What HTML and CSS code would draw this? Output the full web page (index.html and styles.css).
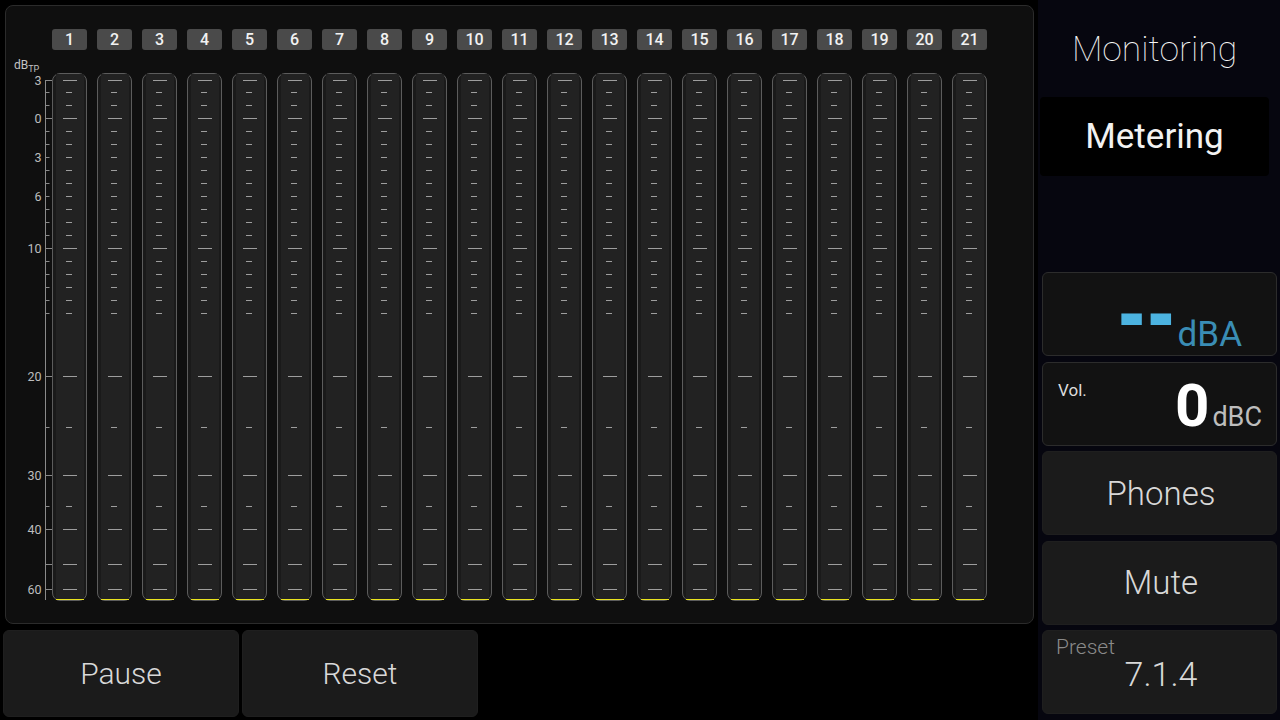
FILE: index.html
```html
<!DOCTYPE html>
<html>
<head>
<meta charset="utf-8">
<link rel="stylesheet" href="styles.css">
</head>
<body>
<div class="left">
  <div class="panel">
    <svg class="scale" width="46" height="600" viewBox="0 0 46 600">
      <text class="unit-lbl" x="8" y="63">dB<tspan class="sub" dy="3">TP</tspan></text>
      <g class="axis">
        <line x1="39.5" y1="74" x2="39.5" y2="594"/>
        <line x1="39" y1="74.5" x2="46" y2="74.5"/>
        <line x1="39" y1="86.5" x2="43.5" y2="86.5"/>
        <line x1="39" y1="99.5" x2="43.5" y2="99.5"/>
        <line x1="39" y1="112.5" x2="46" y2="112.5"/>
        <line x1="39" y1="125.5" x2="43.5" y2="125.5"/>
        <line x1="39" y1="138.5" x2="43.5" y2="138.5"/>
        <line x1="39" y1="151.5" x2="43.5" y2="151.5"/>
        <line x1="39" y1="164.5" x2="43.5" y2="164.5"/>
        <line x1="39" y1="177.5" x2="43.5" y2="177.5"/>
        <line x1="39" y1="190.5" x2="43.5" y2="190.5"/>
        <line x1="39" y1="203.5" x2="43.5" y2="203.5"/>
        <line x1="39" y1="216.5" x2="43.5" y2="216.5"/>
        <line x1="39" y1="229.5" x2="43.5" y2="229.5"/>
        <line x1="39" y1="242.5" x2="46" y2="242.5"/>
        <line x1="39" y1="255.5" x2="43.5" y2="255.5"/>
        <line x1="39" y1="268.5" x2="43.5" y2="268.5"/>
        <line x1="39" y1="281.5" x2="43.5" y2="281.5"/>
        <line x1="39" y1="294.5" x2="43.5" y2="294.5"/>
        <line x1="39" y1="307.5" x2="43.5" y2="307.5"/>
        <line x1="39" y1="370.5" x2="46" y2="370.5"/>
        <line x1="39" y1="421.5" x2="43.5" y2="421.5"/>
        <line x1="39" y1="469.5" x2="46" y2="469.5"/>
        <line x1="39" y1="500.5" x2="43.5" y2="500.5"/>
        <line x1="39" y1="523.5" x2="46" y2="523.5"/>
        <line x1="39" y1="558.5" x2="46" y2="558.5"/>
        <line x1="39" y1="583.5" x2="46" y2="583.5"/>
      </g>
      <g class="nums">
        <text x="35.5" y="78.5">3</text>
        <text x="35.5" y="116.5">0</text>
        <text x="35.5" y="155.5">3</text>
        <text x="35.5" y="194.5">6</text>
        <text x="35.5" y="246.5">10</text>
        <text x="35.5" y="374.5">20</text>
        <text x="35.5" y="473.5">30</text>
        <text x="35.5" y="527.5">40</text>
        <text x="35.5" y="587.5">60</text>
      </g>
    </svg>
    <div class="channels">
      <div class="ch"><div class="num">1</div><div class="tube"><div class="col"></div></div></div>
      <div class="ch"><div class="num">2</div><div class="tube"><div class="col"></div></div></div>
      <div class="ch"><div class="num">3</div><div class="tube"><div class="col"></div></div></div>
      <div class="ch"><div class="num">4</div><div class="tube"><div class="col"></div></div></div>
      <div class="ch"><div class="num">5</div><div class="tube"><div class="col"></div></div></div>
      <div class="ch"><div class="num">6</div><div class="tube"><div class="col"></div></div></div>
      <div class="ch"><div class="num">7</div><div class="tube"><div class="col"></div></div></div>
      <div class="ch"><div class="num">8</div><div class="tube"><div class="col"></div></div></div>
      <div class="ch"><div class="num">9</div><div class="tube"><div class="col"></div></div></div>
      <div class="ch"><div class="num">10</div><div class="tube"><div class="col"></div></div></div>
      <div class="ch"><div class="num">11</div><div class="tube"><div class="col"></div></div></div>
      <div class="ch"><div class="num">12</div><div class="tube"><div class="col"></div></div></div>
      <div class="ch"><div class="num">13</div><div class="tube"><div class="col"></div></div></div>
      <div class="ch"><div class="num">14</div><div class="tube"><div class="col"></div></div></div>
      <div class="ch"><div class="num">15</div><div class="tube"><div class="col"></div></div></div>
      <div class="ch"><div class="num">16</div><div class="tube"><div class="col"></div></div></div>
      <div class="ch"><div class="num">17</div><div class="tube"><div class="col"></div></div></div>
      <div class="ch"><div class="num">18</div><div class="tube"><div class="col"></div></div></div>
      <div class="ch"><div class="num">19</div><div class="tube"><div class="col"></div></div></div>
      <div class="ch"><div class="num">20</div><div class="tube"><div class="col"></div></div></div>
      <div class="ch"><div class="num">21</div><div class="tube"><div class="col"></div></div></div>
    </div>
  </div>
  <div class="bottom">
    <div class="btn wide">Pause</div>
    <div class="btn wide">Reset</div>
  </div>
</div>
<div class="right">
  <div class="title">Monitoring</div>
  <div class="tab">Metering</div>
  <div class="stack">
    <div class="readout dba"><span class="dash">--</span><span class="dba-unit">dBA</span></div>
    <div class="readout vol"><span class="vol-label">Vol.</span><span class="vol-val"><b class="zero">0</b><span class="dbc">dBC</span></span></div>
    <div class="btn side">Phones</div>
    <div class="btn side">Mute</div>
    <div class="btn side preset"><span class="preset-label">Preset</span><span class="preset-val">7.1.4</span></div>
  </div>
</div>
</body>
</html>
```

FILE: styles.css
```css
html, body {
  margin: 0;
  padding: 0;
}
body {
  width: 1280px;
  height: 720px;
  overflow: hidden;
  background: #000;
  display: flex;
  font-family: Roboto, "Liberation Sans", sans-serif;
  color: #e6e6e6;
}
.left {
  width: 1038px;
  display: flex;
  flex-direction: column;
}
.panel {
  margin: 5px 0 0 5px;
  width: 1029px;
  height: 619px;
  box-sizing: border-box;
  border: 1px solid #2b2b2b;
  border-radius: 8px;
  background: #0f0f0f;
  display: flex;
  align-items: flex-start;
}
.scale {
  flex: none;
  display: block;
}
.unit-lbl {
  font-size: 12px;
  fill: #c4c4c4;
}
.unit-lbl .sub {
  font-size: 9px;
}
.axis line {
  stroke: #8a8a8a;
  stroke-width: 1;
}
.nums text {
  font-size: 12.5px;
  fill: #bdbdbd;
  text-anchor: end;
}
.channels {
  display: flex;
  gap: 10px;
  padding-top: 23px;
}
.ch {
  width: 35px;
  display: flex;
  flex-direction: column;
  gap: 23px;
}
.num {
  height: 21px;
  border-radius: 3px;
  background: #4a4a4a;
  color: #f2f2f2;
  font-size: 16px;
  font-weight: 500;
  line-height: 21px;
  text-align: center;
}
.tube {
  height: 528px;
  box-sizing: border-box;
  border: 1px solid #5c5c5c;
  border-radius: 8px;
  background: #1a1a1a;
  padding: 0 2px 0 3px;
}
.col {
  --tk: #9e9e9e;
  --yl: #e8e21e;
  height: 100%;
  background:
    linear-gradient(var(--yl), var(--yl)) 0 100% / 100% 1px no-repeat,
    linear-gradient(var(--tk), var(--tk)) 7px 6px / 14px 1px no-repeat,
    linear-gradient(var(--tk), var(--tk)) 10px 18px / 6px 1px no-repeat,
    linear-gradient(var(--tk), var(--tk)) 10px 31px / 6px 1px no-repeat,
    linear-gradient(var(--tk), var(--tk)) 7px 44px / 14px 1px no-repeat,
    linear-gradient(var(--tk), var(--tk)) 10px 57px / 6px 1px no-repeat,
    linear-gradient(var(--tk), var(--tk)) 10px 70px / 6px 1px no-repeat,
    linear-gradient(var(--tk), var(--tk)) 10px 83px / 6px 1px no-repeat,
    linear-gradient(var(--tk), var(--tk)) 10px 96px / 6px 1px no-repeat,
    linear-gradient(var(--tk), var(--tk)) 10px 109px / 6px 1px no-repeat,
    linear-gradient(var(--tk), var(--tk)) 10px 122px / 6px 1px no-repeat,
    linear-gradient(var(--tk), var(--tk)) 10px 135px / 6px 1px no-repeat,
    linear-gradient(var(--tk), var(--tk)) 10px 148px / 6px 1px no-repeat,
    linear-gradient(var(--tk), var(--tk)) 10px 161px / 6px 1px no-repeat,
    linear-gradient(var(--tk), var(--tk)) 7px 174px / 14px 1px no-repeat,
    linear-gradient(var(--tk), var(--tk)) 10px 187px / 6px 1px no-repeat,
    linear-gradient(var(--tk), var(--tk)) 10px 200px / 6px 1px no-repeat,
    linear-gradient(var(--tk), var(--tk)) 10px 213px / 6px 1px no-repeat,
    linear-gradient(var(--tk), var(--tk)) 10px 226px / 6px 1px no-repeat,
    linear-gradient(var(--tk), var(--tk)) 10px 239px / 6px 1px no-repeat,
    linear-gradient(var(--tk), var(--tk)) 7px 302px / 14px 1px no-repeat,
    linear-gradient(var(--tk), var(--tk)) 10px 353px / 6px 1px no-repeat,
    linear-gradient(var(--tk), var(--tk)) 7px 401px / 14px 1px no-repeat,
    linear-gradient(var(--tk), var(--tk)) 10px 432px / 6px 1px no-repeat,
    linear-gradient(var(--tk), var(--tk)) 7px 455px / 14px 1px no-repeat,
    linear-gradient(var(--tk), var(--tk)) 7px 490px / 14px 1px no-repeat,
    linear-gradient(var(--tk), var(--tk)) 7px 515px / 14px 1px no-repeat,
    #222222;
}
.bottom {
  display: flex;
  gap: 3px;
  margin: 6px 0 0 3px;
}
.btn {
  box-sizing: border-box;
  background: #1b1b1b;
  border: 1px solid #1f1f1f;
  border-radius: 6px;
  color: #d8d8d8;
  font-weight: 300;
  display: flex;
  align-items: center;
  justify-content: center;
}
.btn.wide {
  width: 236px;
  height: 87px;
  font-size: 30px;
}
.right {
  width: 242px;
  background: #06060f;
  display: flex;
  flex-direction: column;
}
.title {
  margin: 29px 11px 0 2px;
  font-size: 35.5px;
  font-weight: 100;
  line-height: 40px;
  text-align: center;
  color: #f6f6f6;
}
.tab {
  margin: 28px 11px 0 2px;
  height: 79px;
  background: #000;
  border-radius: 4px;
  font-size: 35px;
  font-weight: 400;
  line-height: 40px;
  color: #f2f2f2;
  display: flex;
  align-items: center;
  justify-content: center;
}
.stack {
  margin: auto 3px 6px 4px;
  display: flex;
  flex-direction: column;
  gap: 5.5px;
}
.readout {
  box-sizing: border-box;
  height: 84px;
  background: #121212;
  border: 1px solid #2c2c2c;
  border-radius: 6px;
}
.dba {
  display: flex;
  align-items: baseline;
  justify-content: flex-end;
  padding: 4px 34px 0 0;
}
.dash {
  font-size: 87px;
  font-weight: 700;
  line-height: 0.9;
  color: #4cb3e0;
  margin-right: 2px;
  transform: scale(0.85, 1.2);
  transform-origin: 100% 44px;
}
.dba-unit {
  font-size: 35px;
  line-height: 1;
  color: #3a8db5;
}
.vol {
  display: flex;
  align-items: flex-start;
  justify-content: space-between;
  padding: 0 14px 0 15px;
}
.vol-label {
  margin-top: 17px;
  font-size: 17px;
  line-height: 20px;
  color: #dcdcdc;
}
.vol-val {
  margin-top: 13px;
  display: flex;
  align-items: baseline;
}
.zero {
  font-size: 60px;
  font-weight: 700;
  line-height: 1;
  color: #fff;
}
.dbc {
  margin-left: 3px;
  font-size: 27px;
  line-height: 1;
  color: #bdbdbd;
}
.btn.side {
  height: 84px;
  font-size: 33px;
  padding-left: 3px;
}
.btn.preset {
  flex-direction: column;
  align-items: stretch;
  justify-content: flex-start;
  padding: 4px 0 0 13px;
}
.preset-label {
  font-size: 21px;
  line-height: 24px;
  color: #8a8a8a;
}
.preset-val {
  margin-top: -2px;
  padding-right: 10px;
  font-size: 34px;
  line-height: 34px;
  text-align: center;
  color: #d8d8d8;
}
```
